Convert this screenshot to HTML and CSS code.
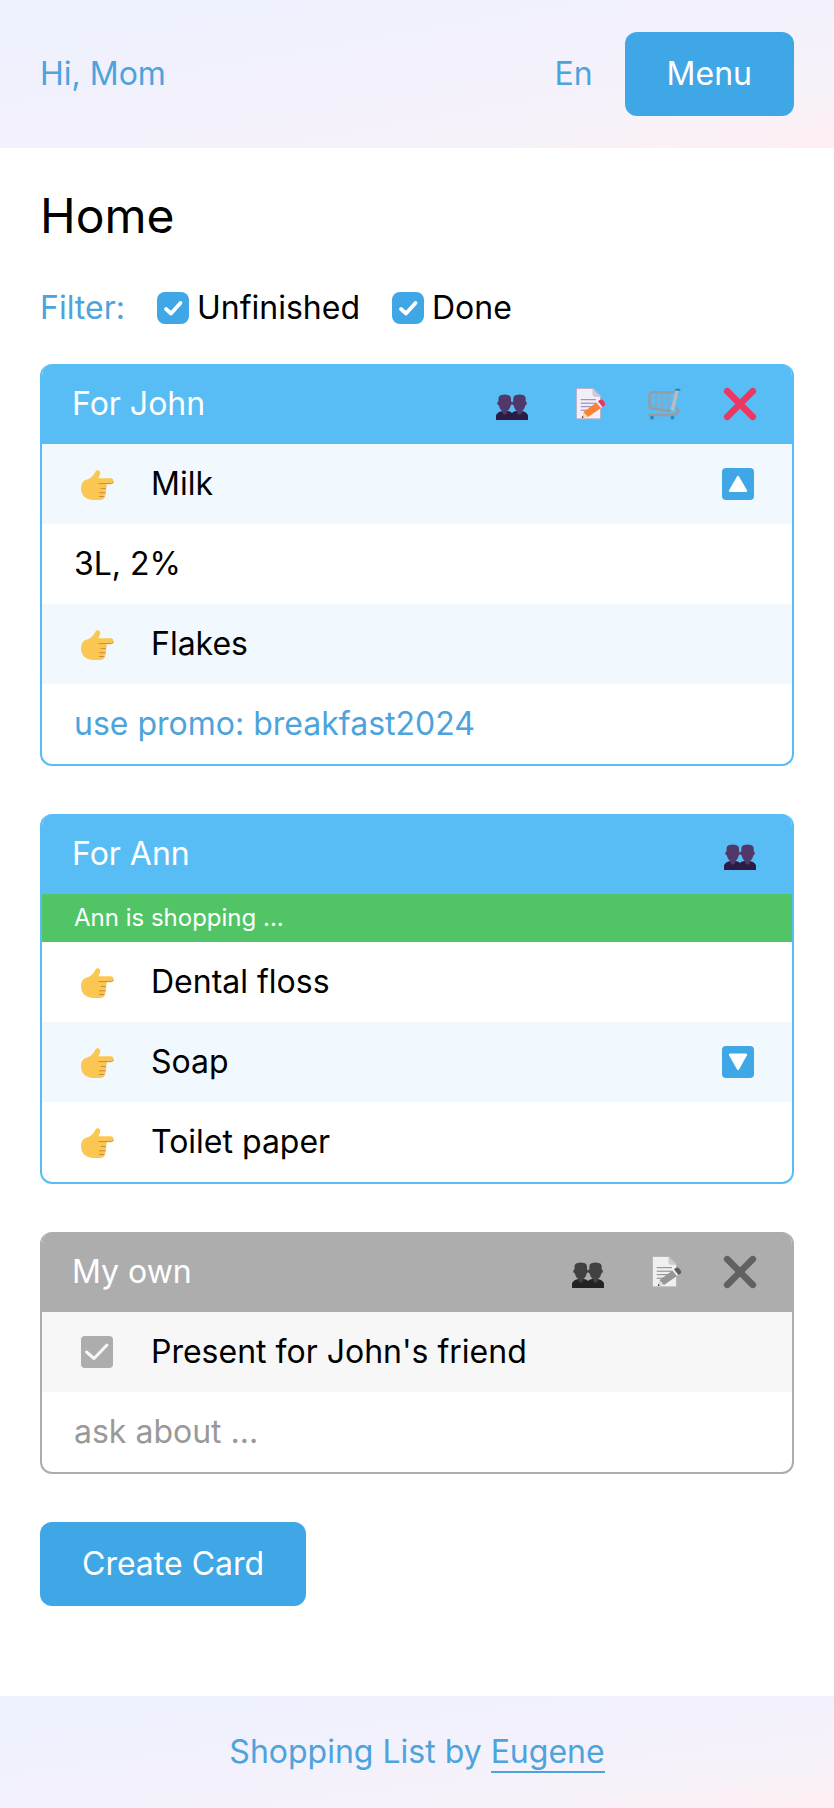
FILE: index.html
```html
<!DOCTYPE html>
<html lang="en">
<head>
<meta charset="utf-8">
<meta name="viewport" content="width=device-width, initial-scale=1">
<title>Shopping List</title>
<link rel="stylesheet" href="styles.css">
</head>
<body>
<svg class="sprite" aria-hidden="true">
  <symbol id="people" viewBox="0 0 32 32">
    <path class="body" d="M0 32V27.500Q1 24 6 23L9 22L12 23Q15 23.500 16 25Q17 23.500 20 23L23 22L26 23Q31 24 32 27.500V32Z"/>
    <path class="head" d="M2.500 11Q2.500 7.500 5.500 6.900Q8.800 6.300 12 6.900Q15 7.500 15 11V13.500Q16.200 13.500 16 15.500Q15.800 17 14.800 17.200Q14 21 11.300 23V25L8.800 27L6.300 25V23Q3.500 21 2.700 17.200Q1.500 17 1.300 15.500Q1.100 13.500 2.500 13.500Z"/>
    <path class="head" d="M17.300 11Q17.300 7.500 20.300 6.900Q23.500 6.300 26.700 6.900Q29.700 7.500 29.700 11V13.500Q31 13.500 30.800 15.500Q30.500 17 29.500 17.200Q28.700 21 26 23V25L23.500 27L21 25V23Q18.300 21 17.500 17.200Q16.200 17 16 15.500Q15.800 13.500 17.300 13.500Z"/>
  </symbol>
  <symbol id="note" viewBox="0 0 32 32">
    <path class="edge" d="M5.500 0H21.500L29 7.500V29.500Q29 31.200 27.300 31.200H5.500Q4 31.200 4 29.500V1.500Q4 0 5.500 0Z"/>
    <path class="paper" d="M5 1H20.700V6.500Q20.700 8.500 22.500 8.500H28V30.200H5Z"/>
    <path class="fold" d="M20.700 1L28 8.300H22.500Q20.700 8.300 20.700 6.500Z"/>
    <path class="lines" d="M8.700 11.700H24M8.700 15.200H24M8.700 18.700H20M8.700 22.200H16"/>
    <path class="wood" d="M9.800 29.900L11.500 24L16 29Z"/>
    <path class="tip" d="M9.800 29.900L10.400 27.800L11.800 29.400Z"/>
    <path class="pencil" d="M11.500 24L24.500 14.500L29 20L16 29Z"/>
    <path class="ferrule" d="M24.500 14.500L26.700 12.800L31 18.500L29 20Z"/>
    <path class="eraser" d="M26 13.300L27.600 12Q29.500 10.600 31.200 12.500L32.700 14.500Q34 16.500 32.200 17.800L30.500 18.900Z"/>
  </symbol>
  <symbol id="cart" viewBox="0 0 32 32">
    <path class="grid" d="M8 4V22M14 4V22M20 4V22M3 10H26M2 16H25"/>
    <path class="wire" d="M27 4.300H5Q1.500 4.300 1.500 8V17Q1.500 20 4.500 20.500L22 22.700M28.500 20Q31 22.500 29.500 25Q28.500 27 25 27H1"/>
    <path class="frame" d="M29 2.500L24.300 22.500"/>
    <path class="handle" d="M28 1.700H31.500"/>
    <circle class="wheel" cx="4" cy="29.700" r="1.900"/>
    <circle class="wheel" cx="24.500" cy="29.700" r="1.900"/>
  </symbol>
  <symbol id="cross" viewBox="0 0 32 32">
    <path class="mark" d="M3.200 3.200L28.800 28.800M28.800 3.200L3.200 28.800"/>
  </symbol>
  <symbol id="hand" viewBox="0 -1 32 32">
    <path class="palm" d="M0 19Q0 12 6 10.500Q10 9.500 12.500 6L14.500 2.500Q15.500 0.500 18 1.500Q20 2.800 19 5.500L17.500 9.200H30Q32.500 9.500 32.500 12Q32.500 14.500 30 14.800L25.500 15.300Q26.500 17 25 19Q26 21 24.500 23Q25.200 25 24 27Q23.500 30.800 19 31H13Q0 30.500 0 19Z"/>
    <path class="crease" d="M17.800 14.600H30.500Q32 14.300 32.400 13M20 19.400H24.700M18.500 23.800H24.300M18.500 27.500H23"/>
  </symbol>
  <symbol id="up" viewBox="0 0 32 32">
    <rect class="tile" width="32" height="32" rx="4"/>
    <path class="arrow" d="M15 8.500Q16 7 17 8.500L25 22.300Q25.500 24 24 24H8Q6.500 24 7 22.300Z"/>
  </symbol>
  <symbol id="down" viewBox="0 0 32 32">
    <rect class="tile" width="32" height="32" rx="4"/>
    <path class="arrow" d="M15 23.500Q16 25 17 23.500L25 9.200Q25.500 7.500 24 7.500H8Q6.500 7.500 7 9.200Z"/>
  </symbol>
</svg>

<header class="bar top-bar">
  <span class="greeting">Hi, Mom</span>
  <a class="lang" href="#">En</a>
  <button class="button" type="button">Menu</button>
</header>

<main class="content">
  <h1 class="title">Home</h1>
  <form class="filter">
    <span class="filter-label">Filter:</span>
    <label class="option"><input class="check" type="checkbox" checked>Unfinished</label>
    <label class="option"><input class="check" type="checkbox" checked>Done</label>
  </form>

  <section class="card">
    <div class="card-head">
      <h2 class="card-title">For John</h2>
      <button class="icon-button" type="button" aria-label="Share"><svg class="icon"><use href="#people"/></svg></button>
      <button class="icon-button" type="button" aria-label="Edit"><svg class="icon"><use href="#note"/></svg></button>
      <button class="icon-button" type="button" aria-label="Shop"><svg class="icon"><use href="#cart"/></svg></button>
      <button class="icon-button" type="button" aria-label="Delete"><svg class="icon"><use href="#cross"/></svg></button>
    </div>
    <div class="row tinted">
      <svg class="icon bullet"><use href="#hand"/></svg>
      <span class="item">Milk</span>
      <button class="icon-button" type="button" aria-label="Collapse"><svg class="icon"><use href="#up"/></svg></button>
    </div>
    <div class="row">3L, 2%</div>
    <div class="row tinted">
      <svg class="icon bullet"><use href="#hand"/></svg>
      <span class="item">Flakes</span>
    </div>
    <div class="row comment">use promo: breakfast2024</div>
  </section>

  <section class="card">
    <div class="card-head">
      <h2 class="card-title">For Ann</h2>
      <button class="icon-button" type="button" aria-label="Share"><svg class="icon"><use href="#people"/></svg></button>
    </div>
    <div class="status">Ann is shopping ...</div>
    <div class="row">
      <svg class="icon bullet"><use href="#hand"/></svg>
      <span class="item">Dental floss</span>
    </div>
    <div class="row tinted">
      <svg class="icon bullet"><use href="#hand"/></svg>
      <span class="item">Soap</span>
      <button class="icon-button" type="button" aria-label="Expand"><svg class="icon"><use href="#down"/></svg></button>
    </div>
    <div class="row">
      <svg class="icon bullet"><use href="#hand"/></svg>
      <span class="item">Toilet paper</span>
    </div>
  </section>

  <section class="card done">
    <div class="card-head">
      <h2 class="card-title">My own</h2>
      <button class="icon-button" type="button" aria-label="Share"><svg class="icon"><use href="#people"/></svg></button>
      <button class="icon-button" type="button" aria-label="Edit"><svg class="icon"><use href="#note"/></svg></button>
      <button class="icon-button" type="button" aria-label="Delete"><svg class="icon"><use href="#cross"/></svg></button>
    </div>
    <div class="row tinted">
      <input class="check bullet" type="checkbox" id="present" checked>
      <label class="item" for="present">Present for John's friend</label>
    </div>
    <div class="row comment">ask about ...</div>
  </section>

  <button class="button" type="button">Create Card</button>
</main>

<footer class="bar footer">
  <p class="credit">Shopping List by <a class="author" href="#">Eugene</a></p>
</footer>
</body>
</html>
```
FILE: styles.css
```css
:root {
  --text-blue: #4da3dc;
  --blue: #3fa7e6;
  --card: #58bdf4;
  --tint: #f1f9ff;
}

* {
  box-sizing: border-box;
}

body {
  margin: 0;
  min-height: 100vh;
  display: flex;
  flex-direction: column;
  background: #fff;
  color: #000;
  font: 400 32px/40px Inter, sans-serif;
}

.sprite {
  display: none;
}

.bar {
  display: flex;
  align-items: center;
  background: linear-gradient(to bottom right, #edf1ff, #f3f1fc 50%, #f7f2f9 80%, #ffeff3);
  color: var(--text-blue);
}

.top-bar {
  gap: 32px;
  padding: 32px 40px;
}

.greeting {
  flex: 1;
}

.lang {
  color: inherit;
  text-decoration: none;
}

.button {
  padding: 22px 42px;
  border: 0;
  border-radius: 12px;
  background: var(--blue);
  color: #fff;
  font: inherit;
}

.content {
  flex: 1;
  display: flex;
  flex-direction: column;
  align-items: flex-start;
  padding: 40px 40px 90px;
}

.title {
  margin: 0 0 44px;
  font-size: 48px;
  font-weight: 400;
  line-height: 56px;
}

.filter {
  display: flex;
  flex-wrap: wrap;
  gap: 32px;
  margin-bottom: 36px;
}

.filter-label {
  color: var(--text-blue);
}

.option {
  display: flex;
  align-items: center;
  gap: 8px;
}

.check {
  appearance: none;
  flex: none;
  width: 32px;
  height: 32px;
  margin: 0;
  border-radius: 8px;
  background: var(--blue) url("data:image/svg+xml,%3Csvg xmlns='http://www.w3.org/2000/svg' viewBox='0 0 32 32'%3E%3Cpath d='M9 17l5 4.500L23.500 11' fill='none' stroke='white' stroke-width='3.800' stroke-linecap='round' stroke-linejoin='round'/%3E%3C/svg%3E");
}

.card {
  width: 100%;
  margin-bottom: 48px;
  border: 2px solid var(--card);
  border-top: 0;
  border-radius: 12px;
  overflow: hidden;
}

.card-head {
  display: flex;
  align-items: center;
  gap: 44px;
  min-height: 80px;
  padding: 0 36px 0 30px;
  background: var(--card);
  color: #fff;
}

.card-title {
  flex: 1;
  margin: 0;
  font-size: 32px;
  font-weight: 400;
}

.icon-button {
  flex: none;
  width: 32px;
  height: 32px;
  padding: 0;
  border: 0;
  background: none;
}

.icon {
  display: block;
  flex: none;
  width: 32px;
  height: 32px;
  overflow: visible;
}

symbol {
  overflow: visible;
}

.row {
  display: flex;
  align-items: center;
  min-height: 80px;
  padding: 0 38px 0 32px;
}

.tinted {
  background: var(--tint);
}

.comment {
  color: var(--text-blue);
}

.bullet {
  margin: 0 38px 0 7px;
}

.item {
  flex: 1;
}

.status {
  padding: 4px 32px;
  background: #51c566;
  color: #fff;
  font-size: 24px;
}

.done {
  --card: #adadad;
  --tint: #f7f7f7;
  --text-blue: #999;
}

.done .icon {
  filter: grayscale(1);
}

.done .check {
  border-radius: 4px;
  background: #adadad url("data:image/svg+xml,%3Csvg xmlns='http://www.w3.org/2000/svg' viewBox='0 0 32 32'%3E%3Cpath d='M5.500 16l7.500 6.500L26 9' fill='none' stroke='%23f7f7f7' stroke-width='3' stroke-linecap='round' stroke-linejoin='round'/%3E%3C/svg%3E");
}

.footer {
  justify-content: center;
  padding: 36px 40px;
}

.credit {
  margin: 0;
}

.author {
  color: inherit;
  text-decoration: none;
  border-bottom: 2px solid;
}

.body { fill: #2c1b44; }
.head { fill: #50386a; }
.edge { fill: #b9b3cc; }
.paper { fill: #f2effa; }
.fold { fill: #cfc8df; }
.lines { fill: none; stroke: #8b7fa5; stroke-width: 1; }
.wood { fill: #ffd59c; }
.tip { fill: #4a3560; }
.pencil { fill: #fa8238; }
.ferrule { fill: #f0e6f4; }
.eraser { fill: #e8365f; }
.grid { fill: none; stroke: #8fa5b3; stroke-width: 1.200; }
.wire { fill: none; stroke: #999ba0; stroke-width: 2.400; stroke-linecap: round; }
.frame { fill: none; stroke: #b9bcc0; stroke-width: 3.400; }
.handle { fill: none; stroke: #2c82b5; stroke-width: 2; stroke-linecap: round; }
.wheel { fill: #2c86b8; }
.mark { fill: none; stroke: #ea3862; stroke-width: 6.600; stroke-linecap: round; }
.palm { fill: #fbc752; }
.crease { fill: none; stroke: #c98c3c; stroke-width: 1; stroke-linecap: round; }
.tile { fill: var(--blue); }
.arrow { fill: #fff; }
```
